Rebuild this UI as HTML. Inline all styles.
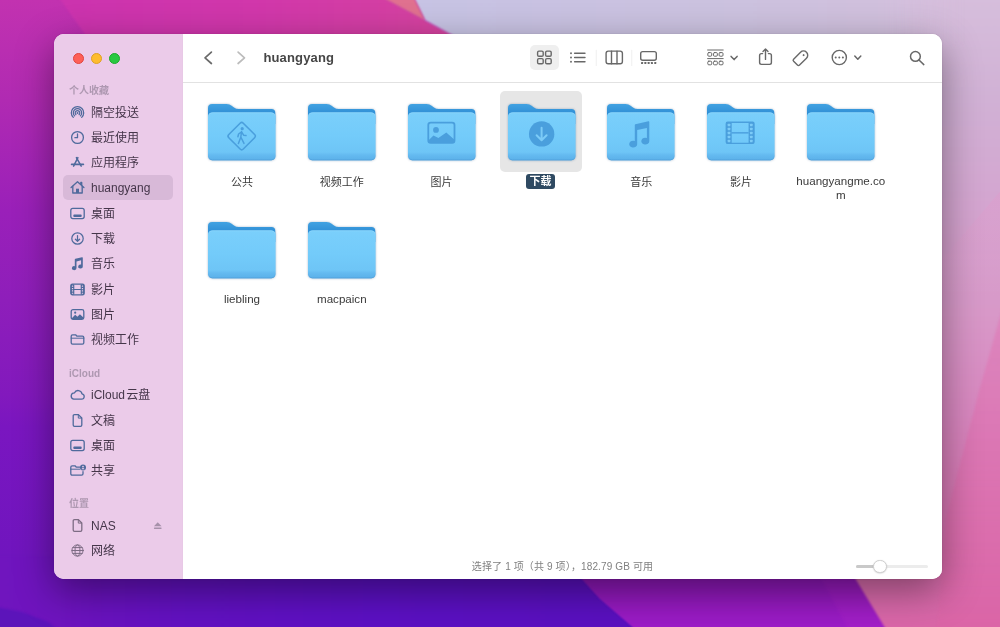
<!DOCTYPE html>
<html lang="zh-CN">
<head>
<meta charset="utf-8">
<title>huangyang</title>
<style>
html,body{margin:0;padding:0;}
body{width:1000px;height:627px;overflow:hidden;position:relative;background:#6a14b8;
  font-family:"Liberation Sans","Noto Sans CJK SC",sans-serif;-webkit-font-smoothing:antialiased;}
#bg{position:absolute;left:0;top:0;width:1000px;height:627px;display:block;}
#win{position:absolute;left:54px;top:34px;width:888px;height:545px;border-radius:10px;
  box-shadow:0 12px 38px rgba(0,0,0,.42),0 0 2px rgba(0,0,0,.12);}
#winclip{position:absolute;left:0;top:0;width:100%;height:100%;border-radius:10px;overflow:hidden;background:#fff;will-change:transform;}
#side{position:absolute;left:0;top:0;width:129px;height:545px;background:#ebcbe9;border-right:1px solid #e8c9e6;box-sizing:border-box;}
.tl{position:absolute;top:18.5px;width:11px;height:11px;border-radius:50%;box-sizing:border-box;}
.sh{position:absolute;left:15px;font-size:10px;line-height:12px;color:#ae98b1;font-weight:bold;white-space:nowrap;}
.si{position:absolute;left:9px;width:110px;height:25px;border-radius:5px;white-space:nowrap;}
.si.sel{background:#d8b9d8;}
.si svg{position:absolute;left:6px;top:4px;width:17px;height:17px;overflow:visible;}
.si .ej{left:89.5px;top:8px;width:9.5px;height:9.5px;}
.si span{position:absolute;left:28px;top:1px;word-spacing:-2px;line-height:25px;font-size:12px;color:#45364a;}
#main{position:absolute;left:129px;top:0;width:759px;height:545px;background:#fff;}
#tb{position:absolute;left:0;top:0;width:759px;height:48.5px;border-bottom:1px solid #e2e2e2;box-sizing:border-box;}
#title{position:absolute;left:80.4px;top:16.2px;letter-spacing:.15px;font-size:13px;line-height:16px;font-weight:bold;color:#464646;}
.ic{position:absolute;overflow:visible;}
.fd{position:absolute;width:67.6px;height:58px;overflow:visible;filter:drop-shadow(0 .7px .8px rgba(30,80,130,.38));}
.fl{position:absolute;width:100px;text-align:center;font-size:11px;line-height:14px;color:#3a3a3a;}
.fl.lat{font-size:11.6px;}
.fl .sel{display:inline-block;background:#2f4a62;color:#fff;font-weight:bold;border-radius:3px;padding:0 3.3px;line-height:15.4px;position:relative;top:-1px;}
#status{position:absolute;left:0;top:526.2px;letter-spacing:.13px;width:759px;text-align:center;font-size:10px;line-height:14px;color:#808080;white-space:nowrap;}
</style>
</head>
<body>
<svg id="bg" viewBox="0 0 1000 627" preserveAspectRatio="none">
<defs>
<linearGradient id="gL" x1="0" y1="0" x2="0" y2="627" gradientUnits="userSpaceOnUse">
<stop offset="0" stop-color="#c232b0"/><stop offset=".16" stop-color="#b02ab2"/><stop offset=".335" stop-color="#9a20b9"/><stop offset=".48" stop-color="#8e1eba"/><stop offset=".63" stop-color="#8219bd"/><stop offset=".68" stop-color="#7a16c0"/><stop offset=".886" stop-color="#7015be"/><stop offset="1" stop-color="#7015be"/>
</linearGradient>
<linearGradient id="gT" x1="55" y1="0" x2="450" y2="0" gradientUnits="userSpaceOnUse">
<stop offset="0" stop-color="#cc33af"/><stop offset=".5" stop-color="#d137ab"/><stop offset=".85" stop-color="#d43fa3"/><stop offset="1" stop-color="#d6449e"/>
</linearGradient>
<linearGradient id="gR" x1="0" y1="0" x2="0" y2="627" gradientUnits="userSpaceOnUse">
<stop offset="0" stop-color="#d6bedc"/><stop offset=".16" stop-color="#d1b1d5"/><stop offset=".33" stop-color="#d4a5d0"/><stop offset=".5" stop-color="#d898c8"/><stop offset=".65" stop-color="#d888c0"/><stop offset=".8" stop-color="#d878b4"/><stop offset="1" stop-color="#da66a8"/>
</linearGradient>
<linearGradient id="gLav" x1="418" y1="0" x2="1000" y2="0" gradientUnits="userSpaceOnUse">
<stop offset="0" stop-color="#c7c3e4"/><stop offset=".55" stop-color="#ccc2df"/><stop offset=".8" stop-color="#d1c0dd"/><stop offset=".94" stop-color="#d6bedc" stop-opacity="0"/><stop offset="1" stop-color="#d6bedc" stop-opacity="0"/>
</linearGradient>
<linearGradient id="gB" x1="0" y1="0" x2="640" y2="0" gradientUnits="userSpaceOnUse">
<stop offset="0" stop-color="#7015be"/><stop offset=".09" stop-color="#6e14be"/><stop offset=".17" stop-color="#6912c0"/><stop offset=".28" stop-color="#6311c2"/><stop offset=".6" stop-color="#5c10c4"/><stop offset="1" stop-color="#5a10c0"/>
</linearGradient>
<linearGradient id="gM" x1="0" y1="575" x2="0" y2="627" gradientUnits="userSpaceOnUse">
<stop offset="0" stop-color="#9219b8"/><stop offset="1" stop-color="#a31fc9"/>
</linearGradient>
<linearGradient id="gM2" x1="0" y1="575" x2="0" y2="627" gradientUnits="userSpaceOnUse">
<stop offset="0" stop-color="#8c17b6"/><stop offset="1" stop-color="#9d1cc8"/>
</linearGradient>
<linearGradient id="gF" x1="0" y1="288" x2="0" y2="627" gradientUnits="userSpaceOnUse">
<stop offset="0" stop-color="#e07cb8" stop-opacity=".55"/><stop offset=".5" stop-color="#de6eae" stop-opacity=".6"/><stop offset="1" stop-color="#dc64a6" stop-opacity=".5"/>
</linearGradient>
<linearGradient id="gA" x1="0" y1="200" x2="0" y2="300" gradientUnits="userSpaceOnUse">
<stop offset="0" stop-color="#de9ccc" stop-opacity=".45"/><stop offset="1" stop-color="#de9ccc" stop-opacity="0"/>
</linearGradient>
<filter id="b1" color-interpolation-filters="sRGB" filterUnits="userSpaceOnUse" x="-100" y="-100" width="1200" height="827"><feGaussianBlur stdDeviation="0.8"/></filter>
<filter id="b6" color-interpolation-filters="sRGB" filterUnits="userSpaceOnUse" x="-100" y="-100" width="1200" height="827"><feGaussianBlur stdDeviation="5"/></filter>
</defs>
<rect x="-5" y="-5" width="1010" height="637" fill="url(#gL)"/>
<!-- top magenta band -->
<polygon points="55,-8 372.2,-8 387,0 470,44.8 92,44" fill="url(#gT)" filter="url(#b1)"/>
<!-- bottom deep violet -->
<path d="M-8 556H568L582 578Q606 606 646 636H-8Z" fill="url(#gB)" filter="url(#b1)"/>
<polygon points="-8,606 22,612 48,622 66,636 -8,636" fill="#5c14ba" filter="url(#b1)"/>
<!-- bottom mid purple -->
<polygon points="566,552 582,578 600,598 644,636 900,636 850,552" fill="url(#gM)" filter="url(#b1)"/>
<polygon points="566,552 582,578 600,598 644,636 852,636 821,578 808,552" fill="url(#gM2)" filter="url(#b1)"/>
<!-- right pink column -->
<polygon points="862,-8 1008,-8 1008,636 890,636 855,578 840,552 862,552" fill="url(#gR)" filter="url(#b1)"/>
<!-- lavender top -->
<polygon points="411,-8 415,0 425,20 470,44.8 1008,44 1008,-8" fill="url(#gLav)" filter="url(#b1)"/>
<!-- right pink column -->
<polygon points="1008,288 978,395 946,518 936,640 1008,640" fill="url(#gF)" filter="url(#b1)"/>
<polygon points="1008,182 940,262 940,300 1008,300" fill="url(#gA)"/>
<!-- salmon wedge -->
<polygon points="372.2,-8 411,-8 415,0 425,20.5 387,0" fill="#e0718f" filter="url(#b1)"/>
</svg>

<div id="win"><div id="winclip">
<div id="side">
  <div class="tl" style="left:18.5px;background:#fe5f57;border:0.5px solid #e0443e;"></div>
  <div class="tl" style="left:36.8px;background:#febc2e;border:0.5px solid #dea123;"></div>
  <div class="tl" style="left:55px;background:#28c840;border:0.5px solid #1aab29;"></div>
  <div class="sh" style="top:50.9px">个人收藏</div>
  <div class="si" style="top:65.5px"><svg viewBox="0 0 17 17" ><g fill="none" stroke="#4f6a9c" stroke-width="1.25" stroke-linecap="round" stroke-linejoin="round"><path d="M4.3 13.4A6.2 6.2 0 1 1 12.7 13.4"/><path d="M5.6 11.9A4.2 4.2 0 1 1 11.4 11.9"/><path d="M6.9 10.5A2.3 2.3 0 1 1 10.1 10.5"/></g><circle cx="8.5" cy="8.9" r="1" fill="#4f6a9c"/></svg><span>隔空投送</span></div>
  <div class="si" style="top:90.8px"><svg viewBox="0 0 17 17" ><g fill="none" stroke="#4f6a9c" stroke-width="1.3" stroke-linecap="round" stroke-linejoin="round"><circle cx="8.5" cy="8.5" r="5.9"/><path d="M8.5 4.9V8.7H5.9"/></g></svg><span>最近使用</span></div>
  <div class="si" style="top:116.1px"><svg viewBox="0 0 17 17" ><g fill="none" stroke="#4f6a9c" stroke-width="1.5" stroke-linecap="round" stroke-linejoin="round"><path d="M8.9 3.6L4.6 12.2"/><path d="M7.4 3.6L12.2 12.2"/><path d="M2.6 10.3H14.4" stroke-width="1.7"/></g></svg><span>应用程序</span></div>
  <div class="si sel" style="top:141.4px"><svg viewBox="0 0 17 17" ><g fill="none" stroke="#4f6a9c" stroke-width="1.35" stroke-linecap="round" stroke-linejoin="round"><path d="M2.1 8.5L8.5 2.8L14.9 8.5"/><path d="M3.8 7.4V14H13.2V7.4"/><path d="M11.8 5.4V3.5H12.7V6.2"/></g><rect x="7" y="9.7" width="3" height="4.3" fill="#4f6a9c"/></svg><span>huangyang</span></div>
  <div class="si" style="top:166.7px"><svg viewBox="0 0 17 17" ><g fill="none" stroke="#4f6a9c" stroke-width="1.3" stroke-linecap="round" stroke-linejoin="round"><rect x="1.8" y="3.4" width="13.4" height="10.2" rx="2"/></g><rect x="4.4" y="9.6" width="8.2" height="2.3" rx=".6" fill="#4f6a9c"/></svg><span>桌面</span></div>
  <div class="si" style="top:192.0px"><svg viewBox="0 0 17 17" ><g fill="none" stroke="#4f6a9c" stroke-width="1.25" stroke-linecap="round" stroke-linejoin="round"><circle cx="8.5" cy="8.5" r="5.7"/><path d="M8.5 5.6V11.2M6.4 9.2L8.5 11.3L10.6 9.2"/></g></svg><span>下载</span></div>
  <div class="si" style="top:217.3px"><svg viewBox="0 0 17 17" ><path fill="#4f6a9c" d="M5.8 4.4Q5.8 3.8 6.4 3.7L13 2.2Q13.8 2 13.8 2.8V11.4A2.3 2 0 1 1 12.1 9.6V5.3L7.5 6.4V13A2.3 2 0 1 1 5.8 11.2Z"/></svg><span>音乐</span></div>
  <div class="si" style="top:242.6px"><svg viewBox="0 0 17 17" ><g fill="none" stroke="#4f6a9c" stroke-width="1.2" stroke-linecap="round" stroke-linejoin="round"><rect x="1.8" y="3.2" width="13.4" height="10.6" rx="1.6"/><path d="M5.3 8.5H11.7"/></g><rect x="1.8" y="3.2" width="3.5" height="10.6" rx="1.2" fill="#4f6a9c"/><rect x="11.7" y="3.2" width="3.5" height="10.6" rx="1.2" fill="#4f6a9c"/><g fill="#ebcbe9"><rect x="2.9" y="4.60" width="1.3" height="1.2" rx=".3"/><rect x="2.9" y="6.95" width="1.3" height="1.2" rx=".3"/><rect x="2.9" y="9.30" width="1.3" height="1.2" rx=".3"/><rect x="2.9" y="11.65" width="1.3" height="1.2" rx=".3"/><rect x="12.8" y="4.60" width="1.3" height="1.2" rx=".3"/><rect x="12.8" y="6.95" width="1.3" height="1.2" rx=".3"/><rect x="12.8" y="9.30" width="1.3" height="1.2" rx=".3"/><rect x="12.8" y="11.65" width="1.3" height="1.2" rx=".3"/></g></svg><span>影片</span></div>
  <div class="si" style="top:267.9px"><svg viewBox="0 0 17 17" ><g fill="none" stroke="#4f6a9c" stroke-width="1.3" stroke-linecap="round" stroke-linejoin="round"><rect x="2.2" y="3.6" width="12.6" height="9.8" rx="1.8"/></g><path fill="#4f6a9c" d="M2.6 12.4L6.2 8.8L8.4 10.8L10.9 8.2L14.4 11.6V12.2Q14.4 13 13.4 13H3.6Q2.6 13 2.6 12.4Z"/><circle cx="6.2" cy="6.7" r="1.1" fill="#4f6a9c"/></svg><span>图片</span></div>
  <div class="si" style="top:293.3px"><svg viewBox="0 0 17 17" ><g fill="none" stroke="#4f6a9c" stroke-width="1.3" stroke-linecap="round" stroke-linejoin="round"><path d="M2.2 5.2Q2.2 3.8 3.6 3.8H6.6L8 5.2H13.4Q14.8 5.2 14.8 6.6V11.8Q14.8 13.2 13.4 13.2H3.6Q2.2 13.2 2.2 11.8Z"/><path d="M2.2 7.2H14.8" stroke-width="1"/></g></svg><span>视频工作</span></div>
  <div class="sh" style="top:333.8px">iCloud</div>
  <div class="si" style="top:348.2px"><svg viewBox="0 0 17 17" ><g fill="none" stroke="#4f6a9c" stroke-width="1.3" stroke-linecap="round" stroke-linejoin="round"><path d="M4.6 13.2H12.6A2.7 2.7 0 0 0 13 7.85A4 4 0 0 0 5.4 6.9A3.2 3.2 0 0 0 4.6 13.2Z"/></g></svg><span>iCloud 云盘</span></div>
  <div class="si" style="top:373.5px"><svg viewBox="0 0 17 17" ><g fill="none" stroke="#4f6a9c" stroke-width="1.3" stroke-linecap="round" stroke-linejoin="round"><path d="M4.2 3.9Q4.2 2.6 5.5 2.6H9.4L12.8 6V13.1Q12.8 14.4 11.5 14.4H5.5Q4.2 14.4 4.2 13.1Z"/><path d="M9.3 2.8V6.1H12.6" stroke-width="1"/></g></svg><span>文稿</span></div>
  <div class="si" style="top:398.7px"><svg viewBox="0 0 17 17" ><g fill="none" stroke="#4f6a9c" stroke-width="1.3" stroke-linecap="round" stroke-linejoin="round"><rect x="1.8" y="3.4" width="13.4" height="10.2" rx="2"/></g><rect x="4.4" y="9.6" width="8.2" height="2.3" rx=".6" fill="#4f6a9c"/></svg><span>桌面</span></div>
  <div class="si" style="top:423.9px"><svg viewBox="0 0 17 17" ><g fill="none" stroke="#4f6a9c" stroke-width="1.3" stroke-linecap="round" stroke-linejoin="round"><path d="M1.8 5.2Q1.8 3.8 3.2 3.8H6L7.4 5.2H11.2M14 9.6V11.8Q14 13.2 12.6 13.2H3.2Q1.8 13.2 1.8 11.8V5.2"/><path d="M1.8 7.2H10.8" stroke-width="1"/></g><circle cx="14" cy="5.6" r="3" fill="#4f6a9c"/><circle cx="14" cy="4.6" r=".9" fill="#ebcbe9"/><path d="M12.4 7.2Q14 5 15.6 7.2Z" fill="#ebcbe9"/></svg><span>共享</span></div>
  <div class="sh" style="top:464.1px">位置</div>
  <div class="si" style="top:478.6px"><svg viewBox="0 0 17 17" ><g fill="none" stroke="#7d6c84" stroke-width="1.3" stroke-linecap="round" stroke-linejoin="round"><path d="M4.2 3.9Q4.2 2.6 5.5 2.6H9.4L12.8 6V13.1Q12.8 14.4 11.5 14.4H5.5Q4.2 14.4 4.2 13.1Z"/><path d="M9.3 2.8V6.1H12.6" stroke-width="1"/></g></svg><span>NAS</span><svg class="ej" viewBox="0 0 10 10"><path fill="#a691aa" d="M5 1.2L9 5.6H1Z"/><rect x="1" y="6.9" width="8" height="1.5" rx=".4" fill="#a691aa"/></svg></div>
  <div class="si" style="top:503.9px"><svg viewBox="0 0 17 17" ><g fill="none" stroke="#7d6c84" stroke-width="1.0" stroke-linecap="round" stroke-linejoin="round"><circle cx="8.5" cy="8.5" r="5.6"/><ellipse cx="8.5" cy="8.5" rx="2.5" ry="5.6"/><path d="M2.9 8.5H14.1M3.8 5.6H13.2M3.8 11.4H13.2"/></g></svg><span>网络</span></div>
</div>
<div id="main">
  <div id="tb">
    <div id="title">huangyang</div>
    <div style="position:absolute;left:346.5px;top:11.25px;width:29.75px;height:24.5px;border-radius:5px;background:#efefef"></div>
    <svg class="ic" style="left:0;top:0" width="759" height="47" viewBox="0 0 759 47">
    <path d="M28.4 18.1L22 23.8L28.4 29.5" fill="none" stroke="#6b6b6b" stroke-width="1.7" stroke-linecap="round" stroke-linejoin="round"/>
    <path d="M55.1 18.1L61.5 23.8L55.1 29.5" fill="none" stroke="#bcbcbc" stroke-width="1.7" stroke-linecap="round" stroke-linejoin="round"/>
    <g fill="none" stroke="#686868" stroke-width="1.4" stroke-linecap="round" stroke-linejoin="round"><rect x="354.6" y="17.1" width="5.6" height="5.1" rx="1.3"/><rect x="362.6" y="17.1" width="5.6" height="5.1" rx="1.3"/><rect x="354.6" y="24.6" width="5.6" height="5.1" rx="1.3"/><rect x="362.6" y="24.6" width="5.6" height="5.1" rx="1.3"/></g>
    <g fill="none" stroke="#686868" stroke-width="1.4" stroke-linecap="round" stroke-linejoin="round"><path d="M391.6 19.3H402M391.6 23.5H402M391.6 27.7H402"/></g><g fill="#686868"><circle cx="388" cy="19.3" r=".95"/><circle cx="388" cy="23.5" r=".95"/><circle cx="388" cy="27.7" r=".95"/></g>
    <path d="M413.25 15.8V32M448.75 15.8V32" stroke="#efefef" stroke-width="1" fill="none"/>
    <g fill="none" stroke="#686868" stroke-width="1.4" stroke-linecap="round" stroke-linejoin="round"><rect x="423.1" y="17.1" width="16.3" height="12.6" rx="2.2"/><path d="M428.5 17.1V29.7M434 17.1V29.7"/></g>
    <g fill="none" stroke="#686868" stroke-width="1.4" stroke-linecap="round" stroke-linejoin="round"><rect x="457.7" y="17.6" width="15.6" height="8.6" rx="2"/></g><g fill="#686868"><rect x="458.0" y="28.1" width="2.1" height="1.8" rx=".4"/><rect x="461.3" y="28.1" width="2.1" height="1.8" rx=".4"/><rect x="464.6" y="28.1" width="2.1" height="1.8" rx=".4"/><rect x="467.9" y="28.1" width="2.1" height="1.8" rx=".4"/><rect x="471.2" y="28.1" width="2.1" height="1.8" rx=".4"/></g>
    <g fill="none" stroke="#686868" stroke-width="1.0" stroke-linecap="round" stroke-linejoin="round"><path d="M524.6 16H540.2M524.6 24.6H540.2"/><rect x="524.80" y="18.6" width="3.9" height="3.6" rx="1"/><rect x="530.45" y="18.6" width="3.9" height="3.6" rx="1"/><rect x="536.10" y="18.6" width="3.9" height="3.6" rx="1"/><rect x="524.80" y="27.2" width="3.9" height="3.6" rx="1"/><rect x="530.45" y="27.2" width="3.9" height="3.6" rx="1"/><rect x="536.10" y="27.2" width="3.9" height="3.6" rx="1"/></g>
    <path d="M548.1 22.4L551.1 25.6L554.1 22.4" fill="none" stroke="#686868" stroke-width="1.5" stroke-linecap="round" stroke-linejoin="round"/>
    <g fill="none" stroke="#686868" stroke-width="1.4" stroke-linecap="round" stroke-linejoin="round"><path d="M579.6 19.6H578.4Q576.6 19.6 576.6 21.4V28.6Q576.6 30.4 578.4 30.4H586.6Q588.4 30.4 588.4 28.6V21.4Q588.4 19.6 586.6 19.6H585.4"/><path d="M582.5 25.4V15.2M580 17.4L582.5 14.9L585 17.4"/></g>
    <g transform="translate(618 23.7) rotate(-45)"><g fill="none" stroke="#686868" stroke-width="1.4" stroke-linecap="round" stroke-linejoin="round"><path d="M-6.25 -4.2H3.55A4.2 4.2 0 0 1 3.55 4.2H-6.25Q-7.75 4.2 -7.75 2.7V-2.7Q-7.75 -4.2 -6.25 -4.2Z"/></g><circle cx="3.7" cy="0" r="1" fill="#686868"/></g>
    <g fill="none" stroke="#686868" stroke-width="1.4" stroke-linecap="round" stroke-linejoin="round"><circle cx="656.3" cy="23.5" r="7.1"/></g><g fill="#686868"><circle cx="652.7" cy="23.5" r="1"/><circle cx="656.3" cy="23.5" r="1"/><circle cx="659.9" cy="23.5" r="1"/></g>
    <path d="M671.8 22L674.8 25.2L677.8 22" fill="none" stroke="#686868" stroke-width="1.5" stroke-linecap="round" stroke-linejoin="round"/>
    <g fill="none" stroke="#686868" stroke-width="1.5" stroke-linecap="round" stroke-linejoin="round"><circle cx="732.4" cy="22.4" r="4.9"/><path d="M736 26L740.8 30.6"/></g>
    </svg>
  </div>
  <svg width="0" height="0" style="position:absolute"><defs><linearGradient id="fb" x1="0" y1="0" x2="0" y2="1"><stop offset="0" stop-color="#41a2e2"/><stop offset=".5" stop-color="#2f8ed5"/><stop offset="1" stop-color="#2f8ed5"/></linearGradient><linearGradient id="ff" x1="0" y1="0" x2="0" y2="1"><stop offset="0" stop-color="#7acffb"/><stop offset=".5" stop-color="#73cbfa"/><stop offset=".83" stop-color="#6ec5f6"/><stop offset=".89" stop-color="#64baf0"/><stop offset="1" stop-color="#5bb0e9"/></linearGradient><linearGradient id="fs" x1="0" y1="0" x2="0" y2="1"><stop offset="0" stop-color="#8fd7fb"/><stop offset=".15" stop-color="#7bcdf9" stop-opacity="0"/><stop offset=".9" stop-color="#56a9e3" stop-opacity="0"/><stop offset="1" stop-color="#4f9fda"/></linearGradient></defs></svg>
  <div style="position:absolute;left:317.4px;top:56.6px;width:81.6px;height:81.4px;border-radius:5px;background:#e6e6e6"></div>
  <svg class="fd" viewBox="0 0 67.6 58" style="left:25.20px;top:69.9px"><path d="M0 4.2Q0 0 4.2 0H18.6Q21.6 0 23.6 1.7L26 3.6Q27.9 5.1 30.8 5.1H63.4Q67.3 5.1 67.3 9.1V20H0Z" fill="url(#fb)"/><rect x="0" y="8.4" width="67.6" height="47.9" rx="4.2" fill="url(#ff)"/><rect x=".4" y="8.8" width="66.8" height="47.1" rx="3.9" fill="none" stroke="url(#fs)" stroke-width=".8"/><g fill="none" stroke="#4a9fdd" stroke-width="1.6" stroke-linejoin="round" stroke-linecap="round"><path d="M35.3 19.2L46.6 30.5Q48.2 32.1 46.6 33.7L35.3 45Q33.7 46.6 32.1 45L20.8 33.7Q19.2 32.1 20.8 30.5L32.1 19.2Q33.7 17.6 35.3 19.2Z"/><path d="M33.6 27.6L32.8 33L36 39.4M32.9 33L30.4 39.6M33.2 28.2L30.6 30L29.9 32.8M33.9 28.4L35.6 31.2L38 31.6" stroke-width="1.5"/></g><circle cx="34.2" cy="24.7" r="1.6" fill="#4a9fdd"/></svg>
  <div class="fl" style="left:9.00px;top:141.0px">公共</div>
  <svg class="fd" viewBox="0 0 67.6 58" style="left:125.00px;top:69.9px"><path d="M0 4.2Q0 0 4.2 0H18.6Q21.6 0 23.6 1.7L26 3.6Q27.9 5.1 30.8 5.1H63.4Q67.3 5.1 67.3 9.1V20H0Z" fill="url(#fb)"/><rect x="0" y="8.4" width="67.6" height="47.9" rx="4.2" fill="url(#ff)"/><rect x=".4" y="8.8" width="66.8" height="47.1" rx="3.9" fill="none" stroke="url(#fs)" stroke-width=".8"/></svg>
  <div class="fl" style="left:108.80px;top:141.0px">视频工作</div>
  <svg class="fd" viewBox="0 0 67.6 58" style="left:224.80px;top:69.9px"><path d="M0 4.2Q0 0 4.2 0H18.6Q21.6 0 23.6 1.7L26 3.6Q27.9 5.1 30.8 5.1H63.4Q67.3 5.1 67.3 9.1V20H0Z" fill="url(#fb)"/><rect x="0" y="8.4" width="67.6" height="47.9" rx="4.2" fill="url(#ff)"/><rect x=".4" y="8.8" width="66.8" height="47.1" rx="3.9" fill="none" stroke="url(#fs)" stroke-width=".8"/><rect x="20.3" y="18.6" width="26.2" height="20.3" rx="2.4" fill="none" stroke="#4a9fdd" stroke-width="1.8"/><path d="M20.6 36.2L25.5 31.4L30.4 34L38.3 28.4L46.2 35.4V37Q46.2 38.6 44.6 38.6H22.2Q20.6 38.6 20.6 37Z" fill="#4a9fdd"/><circle cx="28" cy="25.9" r="2.9" fill="#4a9fdd"/></svg>
  <div class="fl" style="left:208.60px;top:141.0px">图片</div>
  <svg class="fd" viewBox="0 0 67.6 58" style="left:324.60px;top:69.9px"><path d="M0 4.2Q0 0 4.2 0H18.6Q21.6 0 23.6 1.7L26 3.6Q27.9 5.1 30.8 5.1H63.4Q67.3 5.1 67.3 9.1V20H0Z" fill="url(#fb)"/><rect x="0" y="8.4" width="67.6" height="47.9" rx="4.2" fill="url(#ff)"/><rect x=".4" y="8.8" width="66.8" height="47.1" rx="3.9" fill="none" stroke="url(#fs)" stroke-width=".8"/><circle cx="33.65" cy="29.9" r="12.7" fill="#4a9fdd"/><path d="M33.6 23.8V35.6M28.6 31.2L33.6 36.2L38.6 31.2" fill="none" stroke="#7ccbf7" stroke-width="2" stroke-linecap="round" stroke-linejoin="round"/></svg>
  <div class="fl" style="left:307.60px;top:141.0px"><span class="sel">下载</span></div>
  <svg class="fd" viewBox="0 0 67.6 58" style="left:424.40px;top:69.9px"><path d="M0 4.2Q0 0 4.2 0H18.6Q21.6 0 23.6 1.7L26 3.6Q27.9 5.1 30.8 5.1H63.4Q67.3 5.1 67.3 9.1V20H0Z" fill="url(#fb)"/><rect x="0" y="8.4" width="67.6" height="47.9" rx="4.2" fill="url(#ff)"/><rect x=".4" y="8.8" width="66.8" height="47.1" rx="3.9" fill="none" stroke="url(#fs)" stroke-width=".8"/><path fill="#4a9fdd" d="M27.8 20.9Q27.8 20.3 28.4 20.2L41.4 17.3Q42.3 17.1 42.3 18V37.2A4 3.4 0 1 1 39.9 34V23.9L30.2 26.1V40.2A4 3.4 0 1 1 27.8 37Z"/></svg>
  <div class="fl" style="left:408.20px;top:141.0px">音乐</div>
  <svg class="fd" viewBox="0 0 67.6 58" style="left:524.20px;top:69.9px"><path d="M0 4.2Q0 0 4.2 0H18.6Q21.6 0 23.6 1.7L26 3.6Q27.9 5.1 30.8 5.1H63.4Q67.3 5.1 67.3 9.1V20H0Z" fill="url(#fb)"/><rect x="0" y="8.4" width="67.6" height="47.9" rx="4.2" fill="url(#ff)"/><rect x=".4" y="8.8" width="66.8" height="47.1" rx="3.9" fill="none" stroke="url(#fs)" stroke-width=".8"/><rect x="19.3" y="18.3" width="27.7" height="21.1" rx="1.4" fill="none" stroke="#4a9fdd" stroke-width="1.4"/><rect x="19.3" y="18.3" width="5.4" height="21.1" fill="#4a9fdd"/><rect x="41.6" y="18.3" width="5.4" height="21.1" fill="#4a9fdd"/><path d="M24.7 28.85H41.6" stroke="#4a9fdd" stroke-width="1.4"/><g fill="#7ccbf7"><rect x="20.7" y="19.7" width="2.6" height="2.5" rx=".5"/><rect x="20.7" y="23.7" width="2.6" height="2.5" rx=".5"/><rect x="20.7" y="27.7" width="2.6" height="2.5" rx=".5"/><rect x="20.7" y="31.7" width="2.6" height="2.5" rx=".5"/><rect x="20.7" y="35.7" width="2.6" height="2.5" rx=".5"/><rect x="43" y="19.7" width="2.6" height="2.5" rx=".5"/><rect x="43" y="23.7" width="2.6" height="2.5" rx=".5"/><rect x="43" y="27.7" width="2.6" height="2.5" rx=".5"/><rect x="43" y="31.7" width="2.6" height="2.5" rx=".5"/><rect x="43" y="35.7" width="2.6" height="2.5" rx=".5"/></g></svg>
  <div class="fl" style="left:508.00px;top:141.0px">影片</div>
  <svg class="fd" viewBox="0 0 67.6 58" style="left:624.00px;top:69.9px"><path d="M0 4.2Q0 0 4.2 0H18.6Q21.6 0 23.6 1.7L26 3.6Q27.9 5.1 30.8 5.1H63.4Q67.3 5.1 67.3 9.1V20H0Z" fill="url(#fb)"/><rect x="0" y="8.4" width="67.6" height="47.9" rx="4.2" fill="url(#ff)"/><rect x=".4" y="8.8" width="66.8" height="47.1" rx="3.9" fill="none" stroke="url(#fs)" stroke-width=".8"/></svg>
  <div class="fl lat" style="left:607.80px;top:139.7px">huangyangme.co<br>m</div>
  <svg class="fd" viewBox="0 0 67.6 58" style="left:25.20px;top:187.9px"><path d="M0 4.2Q0 0 4.2 0H18.6Q21.6 0 23.6 1.7L26 3.6Q27.9 5.1 30.8 5.1H63.4Q67.3 5.1 67.3 9.1V20H0Z" fill="url(#fb)"/><rect x="0" y="8.4" width="67.6" height="47.9" rx="4.2" fill="url(#ff)"/><rect x=".4" y="8.8" width="66.8" height="47.1" rx="3.9" fill="none" stroke="url(#fs)" stroke-width=".8"/></svg>
  <div class="fl lat" style="left:9.00px;top:257.7px">liebling</div>
  <svg class="fd" viewBox="0 0 67.6 58" style="left:125.00px;top:187.9px"><path d="M0 4.2Q0 0 4.2 0H18.6Q21.6 0 23.6 1.7L26 3.6Q27.9 5.1 30.8 5.1H63.4Q67.3 5.1 67.3 9.1V20H0Z" fill="url(#fb)"/><rect x="0" y="8.4" width="67.6" height="47.9" rx="4.2" fill="url(#ff)"/><rect x=".4" y="8.8" width="66.8" height="47.1" rx="3.9" fill="none" stroke="url(#fs)" stroke-width=".8"/></svg>
  <div class="fl lat" style="left:108.80px;top:257.7px">macpaicn</div>
  <div style="position:absolute;left:672.6px;top:530.6px;width:72.6px;height:3.6px;border-radius:2px;background:#ececec"></div>
  <div style="position:absolute;left:672.6px;top:530.6px;width:24px;height:3.6px;border-radius:2px;background:#c9c9c9"></div>
  <div style="position:absolute;left:690px;top:525.6px;width:13.6px;height:13.6px;border-radius:50%;background:#fff;box-sizing:border-box;border:0.8px solid #cfcfcf;box-shadow:0 .5px 1.5px rgba(0,0,0,.18)"></div>
  <div id="status">选择了 1 项（共 9 项），182.79 GB 可用</div>
</div>
</div></div>
</body>
</html>
